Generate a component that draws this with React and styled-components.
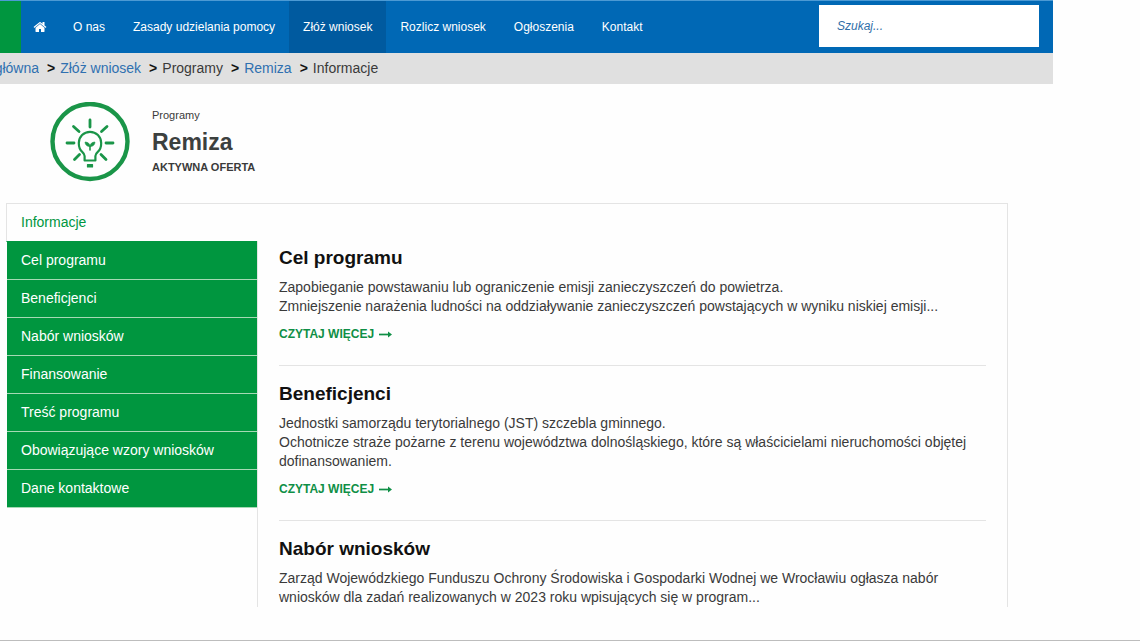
import React from "react";
import styled, { createGlobalStyle } from "styled-components";

const GREEN = "#00963f";
const LINE = "#e4e4e4";

const GlobalStyle = createGlobalStyle`
  *, *::before, *::after { box-sizing: border-box; }
  body {
    margin: 0;
    background: #fefefe;
    color: #3a3a3a;
    font-family: "Liberation Sans", Arial, Helvetica, sans-serif;
    font-size: 14px;
    line-height: 19px;
  }
  a { text-decoration: none; color: inherit; }
  h1, h2, p, ul, ol { margin: 0; padding: 0; }
  ul, ol { list-style: none; }
`;

const Page = styled.div`
  padding-bottom: 33px;
  border-bottom: 1px solid #bdbdbd;
`;

const Header = styled.header`
  margin-right: 87px;
`;

const NavBar = styled.div`
  display: flex;
  height: 53px;
  background: #0068b5;
  border-top: 1px solid #4c9ad4;
`;

const BrandEdge = styled.div`
  width: 21px;
  background: ${GREEN};
`;

const Nav = styled.nav`
  display: flex;
  flex: 1;
`;

const NavLink = styled.a`
  display: flex;
  align-items: center;
  padding: 0 ${(p) => (p.$icon ? 12 : 14)}px;
  color: #fff;
  font-size: 12px;
  white-space: nowrap;
  background: ${(p) => (p.$active ? "#005a9f" : "transparent")};
`;

const SearchForm = styled.form`
  display: flex;
  padding: 4px 14px 6px 0;
`;

const SearchInput = styled.input`
  width: 220px;
  border: 0;
  border-radius: 0;
  padding: 0 18px;
  background: #fff;
  color: #2f6ea8;
  font: italic 12px "Liberation Sans", Arial, sans-serif;
  &::placeholder { color: #2f6ea8; opacity: 1; }
`;

const Breadcrumbs = styled.nav`
  height: 31px;
  padding-top: 6px;
  background: #e0e0e0;
`;

const CrumbList = styled.ol`
  display: flex;
  white-space: nowrap;
`;

const Crumb = styled.li`
  a { color: #2f70b0; }
  & + &::before {
    content: ">";
    margin: 0 5px 0 8px;
    color: #111;
    font-weight: bold;
  }
`;

const FirstCrumb = styled(Crumb)`
  display: flex;
  justify-content: flex-end;
  width: 39px;
  overflow: hidden;
`;

const Offer = styled.section`
  display: flex;
  align-items: flex-start;
  gap: 22px;
  padding: 18px 50px 21px;
`;

const OfferIcon = styled.svg`
  width: 80px;
  height: 80px;
`;

const OfferText = styled.div`
  padding-top: 4px;
`;

const OfferKind = styled.p`
  font-size: 11px;
`;

const OfferTitle = styled.h1`
  color: #3c403e;
  font-size: 23px;
  line-height: 34px;
`;

const OfferStatus = styled.p`
  font-size: 11px;
  line-height: 16px;
  font-weight: bold;
`;

const Panel = styled.main`
  display: flex;
  margin: 0 132px 0 6px;
  border: 1px solid ${LINE};
  border-width: 1px 1px 0 0;
`;

const Sidebar = styled.ul`
  flex: 0 0 251px;
`;

const SideLink = styled.a`
  display: block;
  margin-left: ${(p) => (p.$active ? 0 : 1)}px;
  padding: 9px 14px;
  border-left: ${(p) => (p.$active ? `1px solid ${LINE}` : "0")};
  border-bottom: 1px solid ${(p) => (p.$active ? GREEN : "#a6d9b4")};
  background: ${(p) => (p.$active ? "transparent" : GREEN)};
  color: ${(p) => (p.$active ? GREEN : "#fff")};
`;

const Content = styled.div`
  flex: 1;
  padding: 0 21px;
  margin-top: 37px;
  border-left: 1px solid ${LINE};
`;

const Article = styled.article`
  padding: 6px 0 21px;
  & + & {
    padding-top: 17px;
    border-top: 1px solid ${LINE};
  }
  &:last-child { padding-bottom: 0; }
`;

const ArticleTitle = styled.h2`
  margin-bottom: 9px;
  color: #111;
  font-size: 19px;
  line-height: 22px;
`;

const ReadMore = styled.a`
  display: inline-flex;
  align-items: center;
  gap: 5px;
  margin-top: 9px;
  color: #0f8f46;
  font-size: 12px;
  font-weight: bold;
`;

const Arrow = () => (
  <svg width="13" height="8" viewBox="0 0 13 8" aria-hidden="true">
    <path d="M0 3.500h10.500" stroke="currentColor" strokeWidth="1.700" />
    <path d="M9 .5 13 3.500 9 6.500z" fill="currentColor" />
  </svg>
);

const HomeIcon = () => (
  <svg width="14" height="14" viewBox="0 0 1792 1792" fill="currentColor" aria-hidden="true">
    <path d="M1472 992v480q0 26-19 45t-45 19h-384v-384h-256v384h-384q-26 0-45-19t-19-45v-480q0-1 .5-3t.5-3l575-474 575 474q1 2 1 6zm223-69l-62 74q-8 9-21 11h-3q-13 0-21-7l-692-577-692 577q-12 8-24 7-13-2-21-11l-62-74q-8-10-7-23.500t11-21.500l719-599q32-26 76-26t76 26l244 204v-195q0-14 9-23t23-9h192q14 0 23 9t9 23v408l219 182q10 8 11 21.500t-7 23.500z" />
  </svg>
);

const BulbIcon = () => (
  <OfferIcon viewBox="0 0 80 80" fill="none" stroke="#1a9548" aria-hidden="true">
    <circle cx="40" cy="39.500" r="37.500" strokeWidth="4.400" />
    <g strokeWidth="2.800" strokeLinecap="round">
      <path d="M40 18v7M23.500 24.500l5.500 5M57 24.500l-5.500 5M17 41h7M56 41h7M24.500 57.500l5-5M56 57.500l-5-5" />
    </g>
    <path
      d="M34.600 58.500v-4.500c0-2-1-3-2.400-4.200C30 48 28.800 45 28.800 41a11.200 11.200 0 0 1 22.400 0c0 4-1.200 7-3.400 8.800-1.400 1.200-2.400 2.200-2.400 4.200v4.500z"
      strokeWidth="2.200"
      strokeLinejoin="round"
    />
    <path d="M37.500 62.500h5v2.500h-5z" fill="#1a9548" strokeWidth="1.200" strokeLinejoin="round" />
    <path d="M40 48v-4" strokeWidth="1.600" strokeLinecap="round" />
    <path d="M40 44.500c-3.200 0-4.800-1.700-5-4.500 3 .2 5 1.500 5 4.500zM40 44.500c3.200 0 4.800-1.700 5-4.500-3 .2-5 1.500-5 4.500z" fill="#1a9548" strokeWidth=".6" />
  </OfferIcon>
);

const navItems = ["O nas", "Zasady udzielania pomocy", "Złóż wniosek", "Rozlicz wniosek", "Ogłoszenia", "Kontakt"];

const sideItems = [
  "Informacje",
  "Cel programu",
  "Beneficjenci",
  "Nabór wniosków",
  "Finansowanie",
  "Treść programu",
  "Obowiązujące wzory wniosków",
  "Dane kontaktowe",
];

const articles = [
  {
    title: "Cel programu",
    text: [
      "Zapobieganie powstawaniu lub ograniczenie emisji zanieczyszczeń do powietrza.",
      "Zmniejszenie narażenia ludności na oddziaływanie zanieczyszczeń powstających w wyniku niskiej emisji...",
    ],
    more: true,
  },
  {
    title: "Beneficjenci",
    text: [
      "Jednostki samorządu terytorialnego (JST) szczebla gminnego.",
      "Ochotnicze straże pożarne z terenu województwa dolnośląskiego, które są właścicielami nieruchomości objętej dofinansowaniem.",
    ],
    more: true,
  },
  {
    title: "Nabór wniosków",
    text: [
      "Zarząd Wojewódzkiego Funduszu Ochrony Środowiska i Gospodarki Wodnej we Wrocławiu ogłasza nabór wniosków dla zadań realizowanych w 2023 roku wpisujących się w program...",
    ],
    more: false,
  },
];

export default function App() {
  return (
    <Page>
      <GlobalStyle />
      <Header>
        <NavBar>
          <BrandEdge />
          <Nav aria-label="Menu">
            <NavLink href="#home" aria-label="Home" $icon>
              <HomeIcon />
            </NavLink>
            {navItems.map((item) => (
              <NavLink key={item} href="#nav" $active={item === "Złóż wniosek"}>
                {item}
              </NavLink>
            ))}
          </Nav>
          <SearchForm role="search">
            <SearchInput type="search" placeholder="Szukaj..." aria-label="Szukaj" />
          </SearchForm>
        </NavBar>
        <Breadcrumbs aria-label="Breadcrumb">
          <CrumbList>
            <FirstCrumb><a href="#home">główna</a></FirstCrumb>
            <Crumb><a href="#apply">Złóż wniosek</a></Crumb>
            <Crumb>Programy</Crumb>
            <Crumb><a href="#remiza">Remiza</a></Crumb>
            <Crumb>Informacje</Crumb>
          </CrumbList>
        </Breadcrumbs>
      </Header>
      <Offer>
        <BulbIcon />
        <OfferText>
          <OfferKind>Programy</OfferKind>
          <OfferTitle>Remiza</OfferTitle>
          <OfferStatus>AKTYWNA OFERTA</OfferStatus>
        </OfferText>
      </Offer>
      <Panel>
        <Sidebar>
          {sideItems.map((item) => (
            <li key={item}>
              <SideLink href="#section" $active={item === "Informacje"}>{item}</SideLink>
            </li>
          ))}
        </Sidebar>
        <Content>
          {articles.map((a) => (
            <Article key={a.title}>
              <ArticleTitle>{a.title}</ArticleTitle>
              {a.text.map((t) => (
                <p key={t}>{t}</p>
              ))}
              {a.more && (
                <ReadMore href="#more">
                  CZYTAJ WIĘCEJ <Arrow />
                </ReadMore>
              )}
            </Article>
          ))}
        </Content>
      </Panel>
    </Page>
  );
}
